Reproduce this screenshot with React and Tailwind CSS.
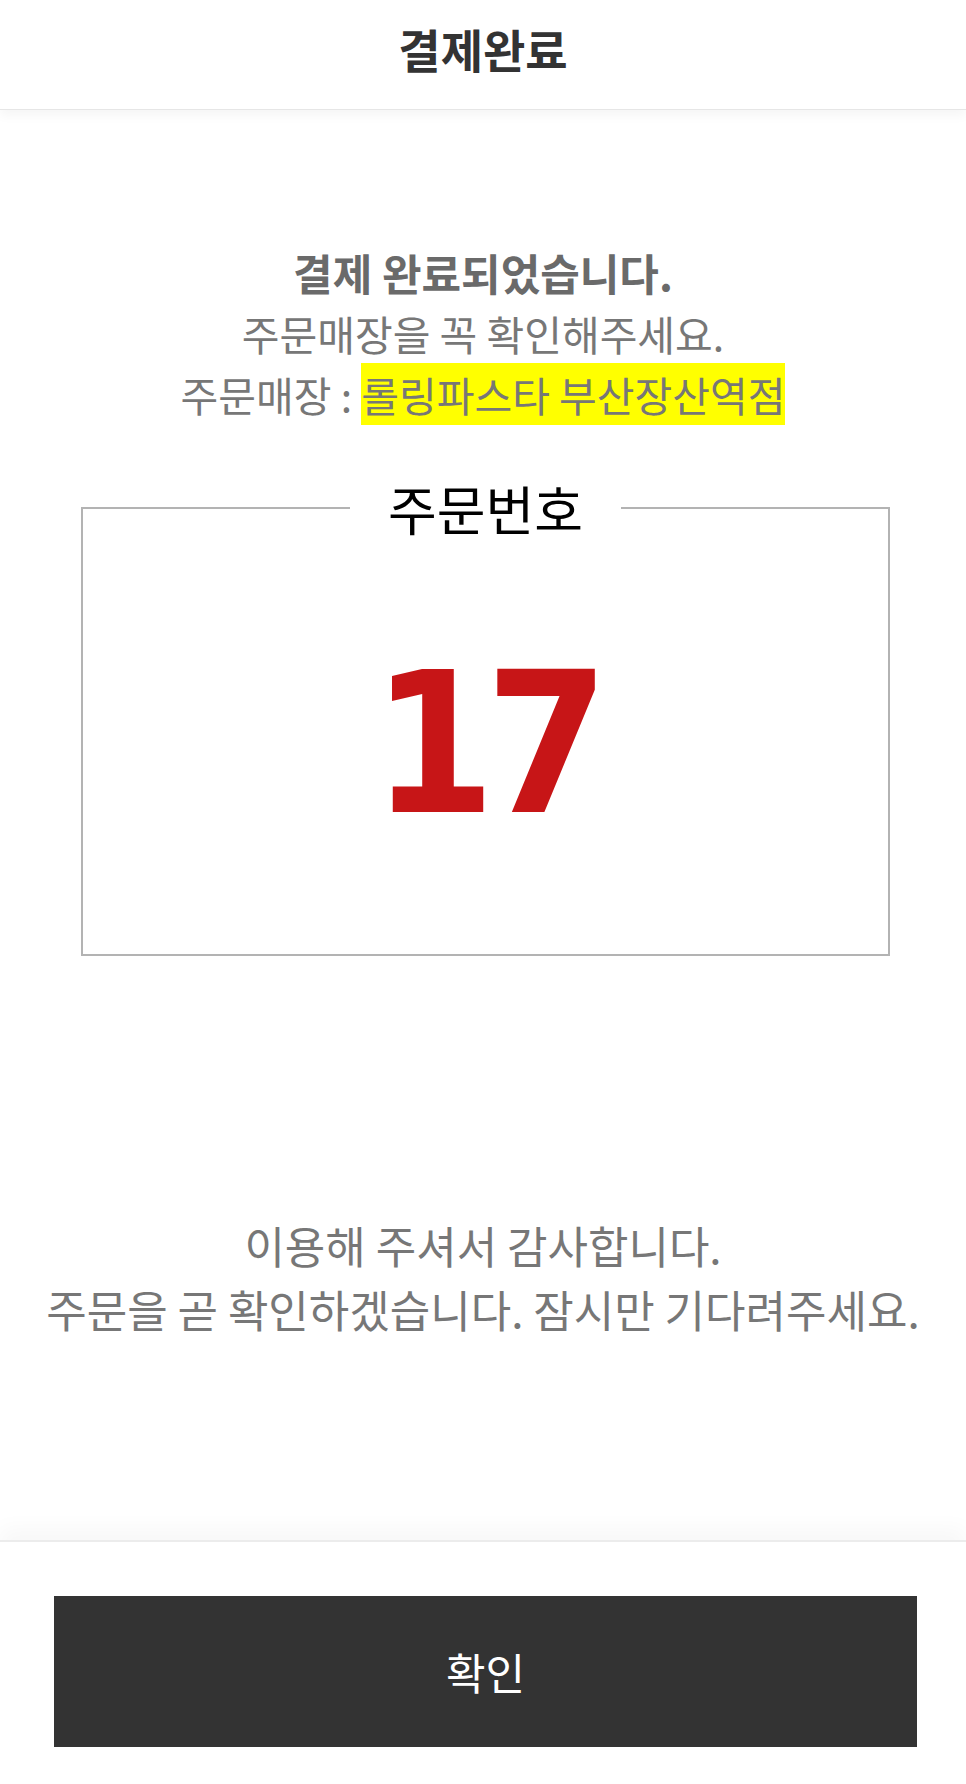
import React from 'react';

// Payment complete screen: header, store notice, order number box, thanks text, confirm button
const App = () => {
  const orderNumber = 17;
  const storeName = '롤링파스타 부산장산역점';

  return (
    <div className="min-h-screen flex flex-col bg-white font-['Noto_Sans_CJK_KR','Noto_Sans',sans-serif]">
      {/* Header */}
      <header className="h-[110px] shrink-0 flex items-center justify-center border-b border-[#e6e6e6] shadow-[0_6px_10px_rgba(0,0,0,0.04)]">
        <h1 className="text-[46px] font-bold text-[#333] leading-none -mt-[14px]">결제완료</h1>
      </header>

      {/* Notice */}
      <section className="pt-[132px] text-center text-[#777] leading-[61px]">
        <p className="text-[43px] font-bold text-[#6a6a6a]">결제 완료되었습니다.</p>
        <p className="text-[41px]">주문매장을 꼭 확인해주세요.</p>
        <p className="text-[41px]">
          주문매장 : <span className="bg-[#ffff00] py-[1px]">{storeName}</span>
        </p>
      </section>

      {/* Order number */}
      <fieldset className="ml-[81px] mr-[76px] mt-[53px] border-[2.5px] border-[#b3b3b3]">
        <legend className="mx-auto px-[38px] text-[53px] leading-[60px] text-black">주문번호</legend>
        <div className="h-[416px] flex items-center justify-center">
          <div className="-mt-[5px] font-['DejaVu_Sans_Condensed','DejaVu_Sans',sans-serif] font-stretch-condensed font-bold text-[197px] leading-none tracking-[-0.05em] text-[#c71517]">
            {orderNumber}
          </div>
        </div>
      </fieldset>

      {/* Thanks */}
      <section className="mt-[257px] text-center text-[44px] leading-[64px] text-[#777]">
        <p>이용해 주셔서 감사합니다.</p>
        <p>주문을 곧 확인하겠습니다. 잠시만 기다려주세요.</p>
      </section>

      {/* Footer */}
      <footer className="mt-auto h-[244px] shrink-0 border-t-2 border-[#ececec] shadow-[0_-12px_20px_rgba(0,0,0,0.03)] pt-[54px] pl-[54px] pr-[49px]">
        <button className="w-full h-[151px] bg-[#333] text-white text-[43px]">확인</button>
      </footer>
    </div>
  );
};

export default App;
